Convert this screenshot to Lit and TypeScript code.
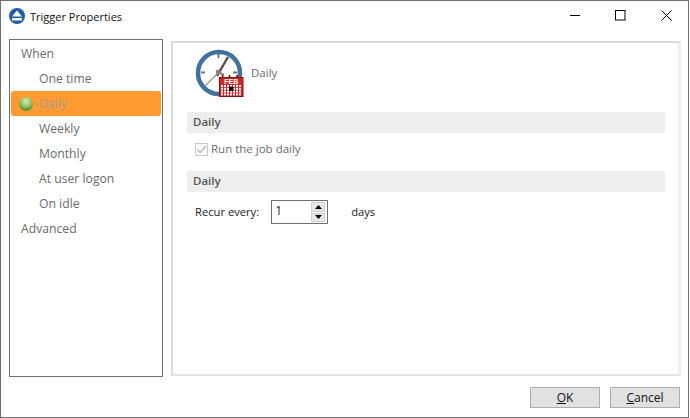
import { LitElement, html, css, svg } from "lit";
import { customElement } from "lit/decorators.js";

const calCols = [0, 1, 2, 3, 4, 5, 6];
const calRows = [0, 1, 2, 3];

@customElement("app-root")
export class AppRoot extends LitElement {
  static styles = css`
    :host { display: block; width: 690px; height: 418px; font-family: "Open Sans", "Noto Sans", sans-serif; font-size: 11.5px; color: #1a1a1a; }
    .win { box-sizing: border-box; width: 689px; height: 418px; border: 1px solid #6f6f6f; background: #fff; display: flex; flex-direction: column; }
    .title { height: 30px; flex: none; display: flex; align-items: center; padding-left: 8px; color: #111; font-size: 11px; }
    .title .t { margin-left: 5px; }
    .logo { display: block; flex: none; margin-top: -1px; }
    .ctrls { margin-left: auto; margin-right: -1px; display: flex; }
    .ctrl { box-sizing: border-box; width: 45px; height: 30px; padding-bottom: 2px; display: flex; align-items: center; justify-content: center; }
    .ctrl.shift { padding-right: 2px; }
    .main { flex: none; height: 346px; box-sizing: border-box; display: flex; padding: 8px 0 0 8px; gap: 8px; }
    .list { box-sizing: border-box; width: 154px; height: 338px; border: 1px solid #6f6f6f; padding: 1px; flex: none; color: #6b6b6b; }
    .item { height: 25px; display: flex; align-items: center; font-size: 12.2px; padding-left: 10px; }
    .item.sub { padding-left: 28px; }
    .item.sel { background: #ff9a33; border-radius: 3px; color: #a59a8e; position: relative; }
    .ball { position: absolute; left: 8px; top: 6px; width: 14px; height: 14px; border-radius: 50%; background: radial-gradient(circle at 50% 30%, #d8ecb0 0, #8fc264 45%, #568a30 78%, #80601c 100%); }
    .panel { box-sizing: border-box; flex: none; width: 510px; height: 335px; margin-top: 2px; border-style: solid; border-width: 2px 3px 2px 2px; border-color: #dcdcdc #eeeeee #e4e4e4 #dcdcdc; padding-left: 14px; }
    .head { display: flex; align-items: flex-start; height: 69px; padding: 2px 0 0 3px; box-sizing: border-box; color: #6b6b6b; }
    .head span { margin: 20px 0 0 1px; line-height: 16px; }
    .clock { display: block; flex: none; }
    .sec { width: 478px; height: 21px; background: #eeeeee; color: #555; font-weight: 600; display: flex; align-items: center; padding: 0 0 2px 6px; box-sizing: border-box; }
    .check { display: flex; align-items: center; height: 38px; box-sizing: border-box; padding: 0 0 6px 8px; color: #6b6b6b; gap: 3px; }
    .check span { margin-top: -2px; }
    .check svg { display: block; flex: none; }
    .recur { display: flex; align-items: center; height: 40px; padding-left: 8px; color: #222; font-size: 11.2px; }
    .recur > span { margin-top: -2px; }
    .spin { box-sizing: border-box; width: 57px; height: 24px; margin-left: 12px; border: 1px solid #6f6f6f; display: flex; align-items: center; justify-content: space-between; padding: 1px 2px 1px 3px; }
    .spin > span { margin-top: -3px; font-size: 12px; }
    .arrows { display: flex; flex-direction: column; width: 14px; height: 20px; gap: 1px; }
    .arrows i { flex: 1; background: #e6e6e6; border: 1px solid #cfcfcf; display: flex; align-items: center; justify-content: center; }
    .arrows svg { display: block; }
    .days { margin-left: 23px; }
    .foot { flex: none; height: 40px; box-sizing: border-box; display: flex; justify-content: flex-end; align-items: flex-start; gap: 10px; padding: 10px 8px 0 0; }
    .btn { box-sizing: border-box; width: 70px; height: 21px; background: #e1e1e1; border: 1px solid #adadad; display: flex; align-items: center; justify-content: center; color: #111; font-size: 12px; }
    u { text-decoration: underline; }
  `;

  render() {
    return html`<div class="win">
      <div class="title">
        <svg class="logo" width="16" height="16" viewBox="0 0 16 16">
          <circle cx="8" cy="8" r="8" fill="#1f5ca6" />
          <path d="M8 2.5 L13 8.5 H3 Z" fill="#fff" />
          <rect x="3" y="10" width="10" height="2.5" fill="#fff" />
        </svg>
        <span class="t">Trigger Properties</span>
        <div class="ctrls">
          <div class="ctrl shift"><svg width="11" height="11"><path d="M0 5.5H10" stroke="#000" /></svg></div>
          <div class="ctrl shift"><svg width="11" height="11"><rect x=".5" y=".5" width="9.5" height="9.5" fill="none" stroke="#000" /></svg></div>
          <div class="ctrl"><svg width="11" height="11"><path d="M.5 .5L10.5 10.5M10.5 .5L.5 10.5" stroke="#000" /></svg></div>
        </div>
      </div>
      <div class="main">
        <div class="list">
          <div class="item">When</div>
          <div class="item sub">One time</div>
          <div class="item sub sel"><span class="ball"></span>Daily</div>
          <div class="item sub">Weekly</div>
          <div class="item sub">Monthly</div>
          <div class="item sub">At user logon</div>
          <div class="item sub">On idle</div>
          <div class="item">Advanced</div>
        </div>
        <div class="panel">
          <div class="head">
            <svg class="clock" width="60" height="55" viewBox="190 45 60 55">
              <circle cx="219" cy="73" r="21" fill="#fff" stroke="#41729f" stroke-width="4.5" />
              <rect x="217.5" y="54" width="2" height="4" fill="#7a7268" />
              <rect x="201" y="71.5" width="4" height="2" fill="#7a7268" />
              <rect x="233" y="71.5" width="4" height="2" fill="#7a7268" />
              <path d="M217 76L228 57" stroke="#5a4a40" stroke-width="2.4" />
              <path d="M218 73L205 86" stroke="#a89c90" stroke-width="1.4" />
              <path d="M216 71L224 75" stroke="#8a8078" stroke-width="2" />
              <circle cx="218" cy="72" r="2.2" fill="#8a8078" />
              <path d="M222.5 75V78M229.5 75V78M237 75V78" stroke="#7a0c0c" stroke-width="1.6" />
              <rect x="219.5" y="77.5" width="23.5" height="19" fill="#d02828" stroke="#850f0f" />
              <text x="231.3" y="84.4" font-size="7" font-weight="700" fill="#fff" text-anchor="middle" font-family="Liberation Sans">FEB</text>
              ${calCols.map((c) => calRows.map((r) => svg`<rect x="${221 + c * 3}" y="${85 + r * 2.8}" width="2" height="2" fill="#fff" />`))}
              <rect x="229" y="86.5" width="4.5" height="4.5" fill="#111" />
            </svg>
            <span>Daily</span>
          </div>
          <div class="sec">Daily</div>
          <div class="check">
            <svg width="13" height="13" viewBox="0 0 13 13"><rect x=".5" y=".5" width="12" height="12" fill="#fff" stroke="#c8c8c8" /><path d="M2.5 6.5L5.2 9.5L10.8 3" fill="none" stroke="#b5b5b5" stroke-width="1.2" /></svg>
            <span>Run the job daily</span>
          </div>
          <div class="sec">Daily</div>
          <div class="recur">
            <span>Recur every:</span>
            <div class="spin">
              <span>1</span>
              <div class="arrows">
                <i><svg width="7" height="4"><path d="M3.5 0L7 4H0Z" fill="#000" /></svg></i>
                <i><svg width="7" height="4"><path d="M0 0H7L3.5 4Z" fill="#000" /></svg></i>
              </div>
            </div>
            <span class="days">days</span>
          </div>
        </div>
      </div>
      <div class="foot">
        <div class="btn"><span><u>O</u>K</span></div>
        <div class="btn"><span><u>C</u>ancel</span></div>
      </div>
    </div>`;
  }
}
